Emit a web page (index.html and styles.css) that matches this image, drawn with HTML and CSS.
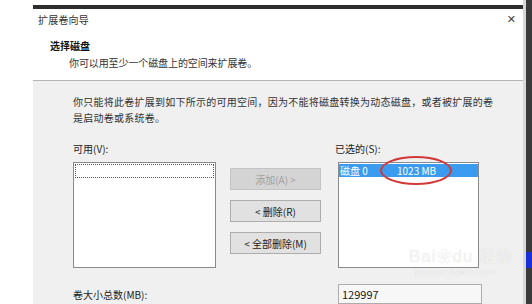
FILE: index.html
```html
<!DOCTYPE html>
<html lang="zh-CN">
<head>
  <meta charset="UTF-8" />
  <title>扩展卷向导</title>
  <link rel="stylesheet" href="styles.css">
</head>
<body>
  <div class="screen">
    <div class="gutter"></div>

    <div class="dialog">
      <div class="titlebar">
        <span class="title">扩展卷向导</span>
        <span class="close">✕</span>
      </div>

      <div class="header">
        <div class="heading">选择磁盘</div>
        <div class="subheading">你可以用至少一个磁盘上的空间来扩展卷。</div>
      </div>

      <div class="content">
        <p class="intro">你只能将此卷扩展到如下所示的可用空间，因为不能将磁盘转换为动态磁盘，或者被扩展的卷<br>是启动卷或系统卷。</p>

        <div class="picker">
          <div class="label">可用(V):</div>
          <div></div>
          <div class="label">已选的(S):</div>

          <div class="listbox">
            <div class="focus-row"></div>
          </div>

          <div class="buttons">
            <div class="btn disabled">添加(A) &gt;</div>
            <div class="btn">&lt; 删除(R)</div>
            <div class="btn">&lt; 全部删除(M)</div>
          </div>

          <div class="listbox selected-list">
            <div class="row selected">
              <span class="disk">磁盘 0</span>
              <span class="size">1023 MB</span>
            </div>
            <div class="circle"></div>
          </div>
        </div>

        <div class="total">
          <span class="total-label">卷大小总数(MB):</span>
          <div class="textbox">129997</div>
        </div>

        <div class="watermark">
          <div class="wm-brand">Bai<span class="paw">❀</span>du <span class="wm-cn">经验</span></div>
          <div class="wm-url">jingyan.baidu.com</div>
        </div>
      </div>
    </div>

    <div class="edge">
      <div class="edge-line"></div>
      <div class="edge-dark">
        <div class="edge-blue"></div>
      </div>
    </div>
  </div>
</body>
</html>
```

FILE: styles.css
```css
body {
  margin: 0;
  background: #fff;
  font-family: "Noto Sans CJK SC", "Liberation Sans", sans-serif;
  font-size: 10px;
  color: #222;
  overflow: hidden;
}

.screen {
  display: flex;
  width: 532px;
  height: 304px;
  overflow: hidden;
}

.gutter {
  width: 33px;
  flex-shrink: 0;
}

.dialog {
  width: 490px;
  flex-shrink: 0;
  margin-top: 5px;
  border-top: 4px solid #2e2e2e;
  display: flex;
  flex-direction: column;
  background: #fff;
}

.titlebar {
  height: 22px;
  display: flex;
  align-items: center;
  justify-content: space-between;
  padding: 0 7px 0 5px;
}

.title {
  color: #333;
  font-size: 10px;
  letter-spacing: 0.2px;
}

.close {
  font-family: "DejaVu Sans", sans-serif;
  font-size: 11px;
  color: #444;
}

.header {
  height: 52px;
  border-bottom: 1px solid #b4b4b4;
  box-sizing: border-box;
  padding: 9px 0 0 17px;
}

.heading {
  font-weight: bold;
  font-size: 10px;
  line-height: 14px;
  color: #111;
}

.subheading {
  margin: 3px 0 0 19px;
  line-height: 14px;
  color: #333;
  letter-spacing: -0.1px;
}

.content {
  position: relative;
  flex: 1;
  background: #f0f0f0;
  padding: 13px 0 0 40px;
}

.intro {
  margin: 0;
  line-height: 16px;
  letter-spacing: 0.25px;
  color: #333;
}

.picker {
  display: grid;
  grid-template-columns: 143px 91px 144px;
  column-gap: 14px;
  margin-top: 15px;
}

.picker > .label:last-of-type {
  margin-left: 3px;
}

.label {
  line-height: 16px;
  margin-bottom: 5px;
  color: #222;
}

.listbox {
  position: relative;
  height: 106px;
  background: #fff;
  border: 1px solid #8a8a8a;
  box-sizing: border-box;
}

.selected-list {
  margin-left: 3px;
}

.focus-row {
  margin: 1px;
  height: 12px;
  border: 1px dotted #555;
}

.buttons {
  display: flex;
  flex-direction: column;
  gap: 10px;
  padding-top: 6px;
}

.btn {
  height: 22px;
  display: flex;
  align-items: center;
  justify-content: center;
  background: #e1e1e1;
  border: 1px solid #adadad;
  box-sizing: border-box;
  color: #222;
}

.btn.disabled {
  background: #d4d4d4;
  border-color: #c4c4c4;
  color: #a0a0a0;
}

.row {
  height: 13px;
  margin: 1px 0 0;
  display: flex;
  align-items: center;
  line-height: 13px;
}

.row.selected {
  background: #3b9bef;
  color: #fff;
}

.disk {
  padding-left: 1px;
  width: 57px;
}

.circle {
  position: absolute;
  left: 41px;
  top: -7px;
  width: 68px;
  height: 25px;
  border: 2px solid #d23a3a;
  border-radius: 50%;
}

.total {
  display: grid;
  grid-template-columns: 265px 144px;
  align-items: start;
  margin-top: 16px;
}

.total-label {
  line-height: 16px;
  margin-top: 3px;
}

.textbox {
  height: 20px;
  border: 1px solid #adadad;
  background: #f7f7f7;
  box-sizing: border-box;
  padding: 1px 3px;
  line-height: 16px;
  font-size: 11px;
}

.watermark {
  position: absolute;
  left: 376px;
  top: 164px;
  color: rgba(255, 255, 255, 0.7);
  text-shadow: 0 0 1px rgba(170, 170, 170, 0.45);
  pointer-events: none;
}

.wm-brand {
  font-family: "Liberation Sans", sans-serif;
  font-size: 17px;
  line-height: 20px;
  letter-spacing: 1px;
}

.wm-cn {
  font-family: "Noto Sans CJK SC", sans-serif;
  font-size: 16px;
}

.paw {
  font-size: 15px;
}

.wm-url {
  font-family: "Liberation Sans", sans-serif;
  font-size: 9px;
  letter-spacing: 0.5px;
  margin-left: 6px;
}

.edge {
  flex: 1;
  display: flex;
}

.edge-line {
  width: 3px;
  background: #d6d8da;
}

.edge-dark {
  flex: 1;
  background: #3a3a3a;
  padding-top: 252px;
}

.edge-blue {
  height: 16px;
  background: #1b2fd8;
}
```
